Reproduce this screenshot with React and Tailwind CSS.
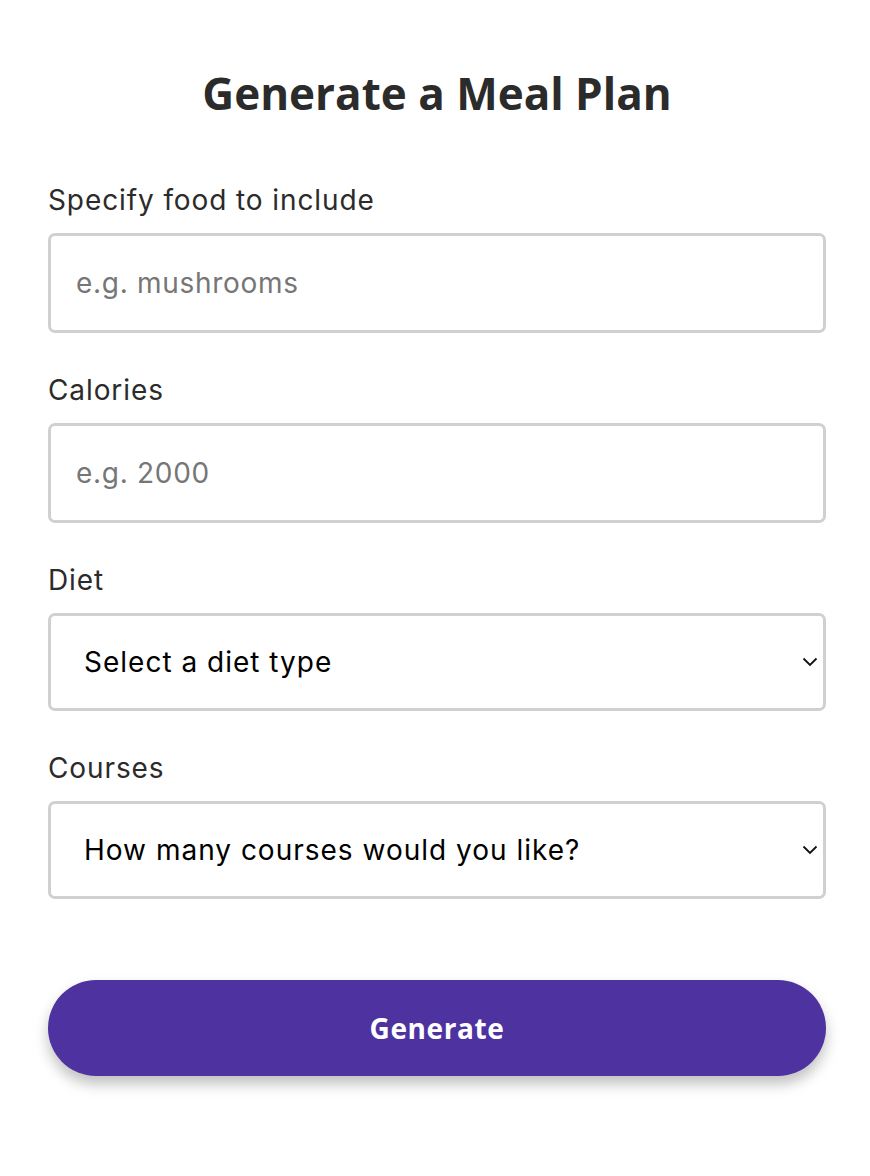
import React from "react";

const Chevron = () => (
  <svg
    className="pointer-events-none absolute right-[8px] top-1/2 -translate-y-1/2"
    width="16"
    height="10"
    viewBox="0 0 16 10"
    fill="none"
  >
    <path d="M1.5 1.5 8 8l6.5-6.5" stroke="#111" strokeWidth="1.8" />
  </svg>
);

const Field = ({ label, children }) => (
  <div className="flex flex-col">
    <label className="mb-[15px] text-[28px] leading-[36px] tracking-[0.9px] text-[#2b2b2b]">
      {label}
    </label>
    {children}
  </div>
);

const inputClasses =
  "h-[100px] w-full rounded-[7px] border-[3px] border-[#d0d0d0] bg-white px-[25px] text-[28px] tracking-[0.7px] text-[#2b2b2b] outline-none placeholder:text-[#767676]";

const selectClasses =
  "h-[98px] w-full appearance-none rounded-[7px] border-[3px] border-[#d0d0d0] bg-white pl-[33px] pr-[40px] text-[28px] tracking-[1px] text-black outline-none";

export default function App() {
  return (
    <div
      className="min-h-screen bg-white pl-[48px] pr-[44px] pt-[67px]"
      style={{ fontFamily: "Inter, 'Open Sans', sans-serif" }}
    >
      <h1
        className="text-center text-[44px] font-bold leading-[52px] text-[#2b2b2b]"
        style={{ fontFamily: "'Open Sans', sans-serif" }}
      >
        Generate a Meal Plan
      </h1>

      <form className="mt-[63px] flex flex-col gap-[39px]">
        <Field label="Specify food to include">
          <input className={inputClasses} placeholder="e.g. mushrooms" />
        </Field>
        <Field label="Calories">
          <input className={inputClasses} placeholder="e.g. 2000" />
        </Field>
        <Field label="Diet">
          <div className="relative">
            <select className={selectClasses} defaultValue="">
              <option value="" disabled>
                Select a diet type
              </option>
              <option>Vegetarian</option>
              <option>Vegan</option>
              <option>Keto</option>
            </select>
            <Chevron />
          </div>
        </Field>
        <Field label="Courses">
          <div className="relative">
            <select className={selectClasses} defaultValue="">
              <option value="" disabled>
                How many courses would you like?
              </option>
              <option>1</option>
              <option>2</option>
              <option>3</option>
            </select>
            <Chevron />
          </div>
        </Field>
      </form>

      <button
        type="button"
        className="mt-[81px] h-[96px] w-full rounded-full bg-[#4e32a0] text-[28px] font-bold tracking-[0.6px] text-white shadow-[0_8px_14px_rgba(0,0,0,0.25)]"
        style={{ fontFamily: "'Open Sans', sans-serif" }}
      >
        Generate
      </button>
    </div>
  );
}
